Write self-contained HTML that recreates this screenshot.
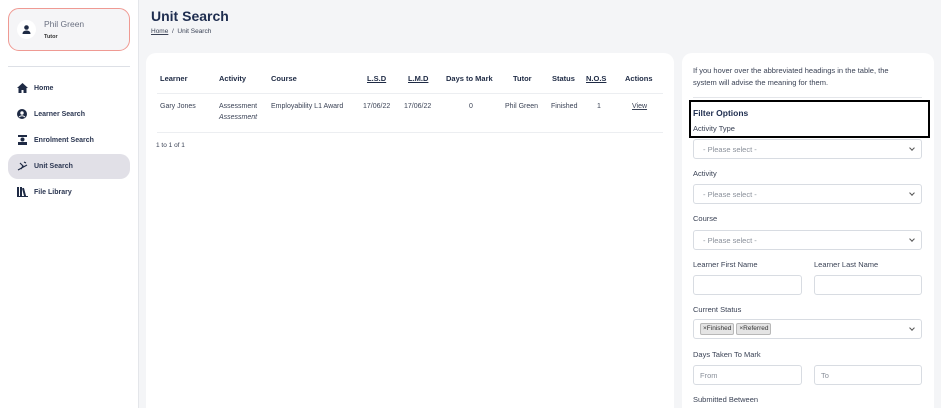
<!DOCTYPE html>
<html><head><meta charset="utf-8"><style>
*{box-sizing:border-box;margin:0;padding:0}
html,body{width:941px;height:408px;overflow:hidden}
body{background:#f4f5f7;font-family:"Liberation Sans",Arial,sans-serif;color:#2a3550;position:relative}
.a{position:absolute;white-space:nowrap}
.side{position:absolute;left:0;top:0;width:139px;height:408px;background:#fff;border-right:1px solid #e4e6ea}
.prof{position:absolute;left:8px;top:8px;width:122px;height:43px;border:1px solid #ef9a93;border-radius:11px;background:#f5f5f7}
.av{position:absolute;left:8px;top:11px;width:19px;height:19px;border-radius:50%;background:#fff}
.nav{font-size:7px;color:#2a3550;font-weight:bold}
.card{position:absolute;background:#fff;border-radius:10px}
.th{font-size:7.5px;font-weight:bold;color:#1e2a44}
.td{font-size:7px;color:#3a4255}
.u{text-decoration:underline}
.lbl{font-size:7.5px;color:#3a4255}
.inp{position:absolute;background:#fff;border:1px solid #d8dce2;border-radius:3px;height:20px}
.ph{position:absolute;left:9px;top:5px;font-size:7.5px;color:#8a909a}
.chev{position:absolute;right:7px;top:6px;width:4px;height:4px;border-right:1px solid #555;border-bottom:1px solid #555;transform:rotate(45deg)}
.tags{position:absolute;left:6px;top:3px;display:flex;gap:2px;white-space:nowrap}
.tag{display:block;background:#e4e4e4;border:1px solid #b8b8b8;border-radius:2px;font-size:6.5px;line-height:8px;padding:1px 2px;color:#333}
</style></head><body>
<div class="side">
 <div class="prof">
  <div class="av"><svg width="19" height="19" viewBox="0 0 19 19"><circle cx="9.5" cy="7.5" r="2.3" fill="#1e2a44"/><path d="M5.5 14 Q5.5 10.5 9.5 10.5 Q13.5 10.5 13.5 14Z" fill="#1e2a44"/></svg></div>
  <div class="a" style="left:35px;top:10px;font-size:8.5px;color:#6a7080">Phil Green</div>
  <div class="a" style="left:35px;top:25px;font-size:5.5px;color:#333;font-weight:bold">Tutor</div>
 </div>
 <div class="a" style="left:8px;top:66px;width:122px;height:1px;background:#dde0e6"></div>
 <div class="a" style="left:8px;top:154px;width:122px;height:25px;background:#e1e0e7;border-radius:10px"></div>
 <svg class="a" style="left:17px;top:83px" width="11" height="10" viewBox="0 0 11 10"><path d="M5.5 0 L11 5 H9.5 V10 H6.5 V7 H4.5 V10 H1.5 V5 H0Z" fill="#1e2a44"/></svg>
 <div class="a nav" style="left:34px;top:85px">Home</div>
 <svg class="a" style="left:17px;top:109px" width="10" height="10" viewBox="0 0 10 10"><circle cx="5" cy="5" r="5" fill="#1e2a44"/><circle cx="5" cy="4" r="1.7" fill="#fff"/><path d="M2 8 Q5 5.5 8 8" stroke="#fff" fill="none"/></svg>
 <div class="a nav" style="left:34px;top:111px">Learner Search</div>
 <svg class="a" style="left:18px;top:135px" width="9" height="10" viewBox="0 0 9 10"><rect x="0" y="0" width="9" height="2" fill="#1e2a44"/><circle cx="4.5" cy="4.5" r="2" fill="#1e2a44"/><rect x="0" y="7" width="9" height="3" fill="#1e2a44"/></svg>
 <div class="a nav" style="left:34px;top:137px">Enrolment Search</div>
 <svg class="a" style="left:17px;top:161px" width="11" height="10" viewBox="0 0 11 10"><path d="M1 9 L10 4 M3 2 L6 5 L4 8 M7 1 L9 2" stroke="#1e2a44" stroke-width="1.2" fill="none"/></svg>
 <div class="a nav" style="left:34px;top:163px">Unit Search</div>
 <svg class="a" style="left:17px;top:187px" width="11" height="10" viewBox="0 0 11 10"><rect x="0" y="0" width="2" height="10" fill="#1e2a44"/><rect x="3" y="0" width="2" height="10" fill="#1e2a44"/><rect x="6" y="1" width="2" height="9" fill="#1e2a44" transform="rotate(-15 7 5)"/><rect x="0" y="9" width="11" height="1" fill="#1e2a44"/></svg>
 <div class="a nav" style="left:34px;top:189px">File Library</div>
</div>

<div class="a" style="left:151px;top:8px;font-size:14px;font-weight:bold;color:#1e2d4f">Unit Search</div>
<div class="a" style="left:151px;top:28px;font-size:6.5px;color:#3a4255"><span class="u">Home</span> &nbsp;/&nbsp; Unit Search</div>

<div class="card" style="left:146px;top:53px;width:528px;height:355px;border-radius:10px 10px 0 0">
 <div class="a th" style="left:14px;top:21px">Learner</div>
 <div class="a th" style="left:73px;top:21px">Activity</div>
 <div class="a th" style="left:125px;top:21px">Course</div>
 <div class="a th u" style="left:221px;top:21px">L.S.D</div>
 <div class="a th u" style="left:262px;top:21px">L.M.D</div>
 <div class="a th" style="left:300px;top:21px">Days to Mark</div>
 <div class="a th" style="left:367px;top:21px">Tutor</div>
 <div class="a th" style="left:406px;top:21px">Status</div>
 <div class="a th u" style="left:440px;top:21px">N.O.S</div>
 <div class="a th" style="left:479px;top:21px">Actions</div>
 <div class="a" style="left:11px;top:40px;width:506px;height:1px;background:#eceef1"></div>
 <div class="a td" style="left:14px;top:50px">Gary Jones</div>
 <div class="a td" style="left:73px;top:50px">Assessment</div>
 <div class="a td" style="left:73px;top:61px;font-style:italic">Assessment</div>
 <div class="a td" style="left:125px;top:50px">Employability L1 Award</div>
 <div class="a td" style="left:217px;top:50px">17/06/22</div>
 <div class="a td" style="left:258px;top:50px">17/06/22</div>
 <div class="a td" style="left:323px;top:50px">0</div>
 <div class="a td" style="left:359px;top:50px">Phil Green</div>
 <div class="a td" style="left:405px;top:50px">Finished</div>
 <div class="a td" style="left:451px;top:50px">1</div>
 <div class="a td u" style="left:486px;top:50px">View</div>
 <div class="a" style="left:11px;top:79px;width:506px;height:1px;background:#eceef1"></div>
 <div class="a td" style="left:10px;top:89px;font-size:6.5px">1 to 1 of 1</div>
</div>

<div class="card" style="left:682px;top:53px;width:252px;height:355px;border-radius:10px 10px 0 0">
 <div class="a lbl" style="left:11px;top:12px;line-height:12px">If you hover over the abbreviated headings in the table, the<br>system will advise the meaning for them.</div>
 <div class="a" style="left:11px;top:44px;width:229px;height:1px;background:#e4e6ea"></div>
</div>
<div class="a" style="left:689px;top:100px;width:241px;height:38px;border:2px solid #000"></div>
<div class="a" style="left:693px;top:108px;font-size:8.5px;font-weight:bold;color:#1e2d4f">Filter Options</div>
<div class="a lbl" style="left:693px;top:124px">Activity Type</div>
<div class="inp" style="left:693px;top:139px;width:229px"><div class="ph">- Please select -</div><div class="chev"></div></div>
<div class="a lbl" style="left:693px;top:169px">Activity</div>
<div class="inp" style="left:693px;top:184px;width:229px"><div class="ph">- Please select -</div><div class="chev"></div></div>
<div class="a lbl" style="left:693px;top:214px">Course</div>
<div class="inp" style="left:693px;top:230px;width:229px"><div class="ph">- Please select -</div><div class="chev"></div></div>
<div class="a lbl" style="left:693px;top:260px">Learner First Name</div>
<div class="a lbl" style="left:814px;top:260px">Learner Last Name</div>
<div class="inp" style="left:693px;top:275px;width:109px"></div>
<div class="inp" style="left:814px;top:275px;width:108px"></div>
<div class="a lbl" style="left:693px;top:305px">Current Status</div>
<div class="inp" style="left:693px;top:319px;width:229px"><div class="tags"><span class="tag">×Finished</span><span class="tag">×Referred</span></div><div class="chev"></div></div>
<div class="a lbl" style="left:693px;top:350px">Days Taken To Mark</div>
<div class="inp" style="left:693px;top:365px;width:109px"><div class="ph" style="left:6px">From</div></div>
<div class="inp" style="left:814px;top:365px;width:108px"><div class="ph" style="left:6px">To</div></div>
<div class="a lbl" style="left:693px;top:395px">Submitted Between</div>
</body></html>
